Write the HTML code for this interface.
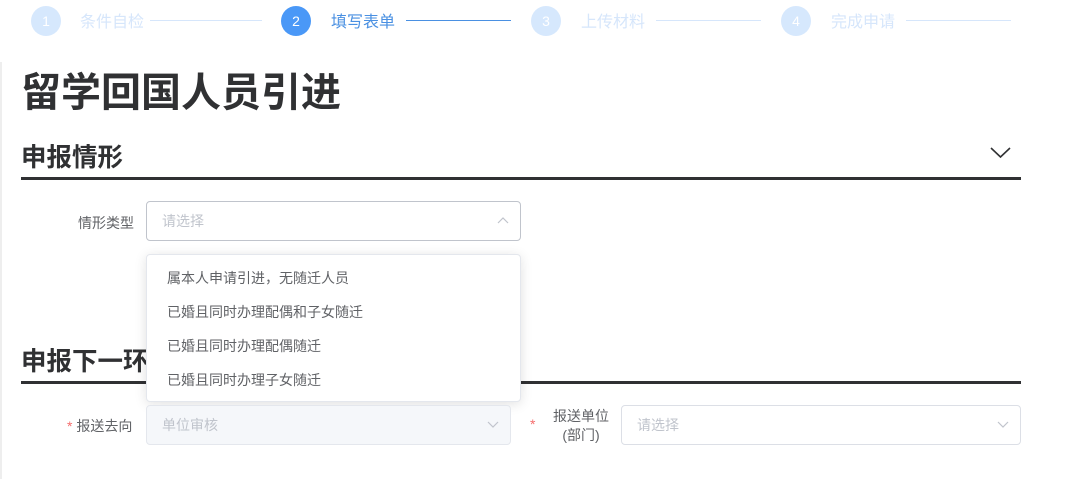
<!DOCTYPE html>
<html><head><meta charset="utf-8"><style>
*{margin:0;padding:0;box-sizing:border-box}
body{width:1079px;height:479px;background:#fff;font-family:"Liberation Sans","Noto Sans CJK SC",sans-serif;position:relative;overflow:hidden}
.a{position:absolute}
.c{width:30px;height:30px;border-radius:50%;color:#fff;font-size:14px;text-align:center;line-height:30px;top:6px}
.st{top:8px;font-size:16px;color:#d6e6fb}
.ln{top:20px;height:1px;background:#d6e6fb}
.h2{font-size:25.5px;font-weight:bold;color:#303133;left:21px}
.bar{left:21px;width:1000px;height:3px;background:#303133}
.sel{border:1px solid #dcdfe6;border-radius:4px;height:40px;font-size:14px;color:#c0c4cc;padding-left:15px;line-height:38px}
.it{left:167px;font-size:14px;color:#606266}
.lb{font-size:14px;color:#606266}
</style></head><body>
<div class="a" style="left:0;top:62px;width:2px;height:417px;background:#eee"></div>
<div class="a c" style="left:31px;background:#d6e8fd">1</div>
<div class="a st" style="left:80px">条件自检</div>
<div class="a ln" style="left:150px;width:112px"></div>
<div class="a c" style="left:281px;background:#4a98f7">2</div>
<div class="a st" style="left:331px;color:#4a90e2">填写表单</div>
<div class="a ln" style="left:406px;width:105px;background:#4a90e2"></div>
<div class="a c" style="left:531px;background:#d6e8fd">3</div>
<div class="a st" style="left:581px">上传材料</div>
<div class="a ln" style="left:656px;width:105px"></div>
<div class="a c" style="left:781px;background:#d6e8fd">4</div>
<div class="a st" style="left:831px">完成申请</div>
<div class="a ln" style="left:906px;width:105px"></div>

<div class="a" style="left:21px;top:60px;font-size:40px;font-weight:bold;color:#303133">留学回国人员引进</div>
<div class="a h2" style="top:137px">申报情形</div>
<svg class="a" style="left:990px;top:147px" width="21" height="12"><path d="M1 1 L10.5 10 L20 1" fill="none" stroke="#303133" stroke-width="1.6"/></svg>
<div class="a bar" style="top:177px"></div>

<div class="a lb" style="left:78px;top:213px">情形类型</div>
<div class="a sel" style="left:146px;top:201px;width:375px;border-color:#c0c4cc">请选择</div>
<svg class="a" style="left:497px;top:216px" width="12" height="8"><path d="M1 7 L6 2 L11 7" fill="none" stroke="#c0c4cc" stroke-width="1.2"/></svg>

<div class="a h2" style="top:341px">申报下一环节</div>
<div class="a bar" style="top:381px"></div>

<div class="a" style="left:146px;top:254px;width:375px;height:148px;background:#fff;border:1px solid #e4e7ed;border-radius:4px;box-shadow:0 2px 12px rgba(0,0,0,.12)"></div>
<div class="a it" style="top:268px">属本人申请引进，无随迁人员</div>
<div class="a it" style="top:302px">已婚且同时办理配偶和子女随迁</div>
<div class="a it" style="top:336px">已婚且同时办理配偶随迁</div>
<div class="a it" style="top:370px">已婚且同时办理子女随迁</div>

<div class="a lb" style="left:67px;top:416px"><span style="color:#f56c6c">*</span> 报送去向</div>
<div class="a sel" style="left:146px;top:405px;width:365px;background:#f5f7fa;border-color:#e4e7ed">单位审核</div>
<svg class="a" style="left:487px;top:421px" width="12" height="8"><path d="M1 1 L6 6 L11 1" fill="none" stroke="#c0c4cc" stroke-width="1.2"/></svg>
<div class="a" style="left:530px;top:416px;font-size:14px;color:#f56c6c">*</div>
<div class="a lb" style="left:548px;top:407px;width:66px;text-align:center;line-height:19px">报送单位<br>(部门)</div>
<div class="a sel" style="left:621px;top:405px;width:400px">请选择</div>
<svg class="a" style="left:997px;top:421px" width="12" height="8"><path d="M1 1 L6 6 L11 1" fill="none" stroke="#c0c4cc" stroke-width="1.2"/></svg>
</body></html>
